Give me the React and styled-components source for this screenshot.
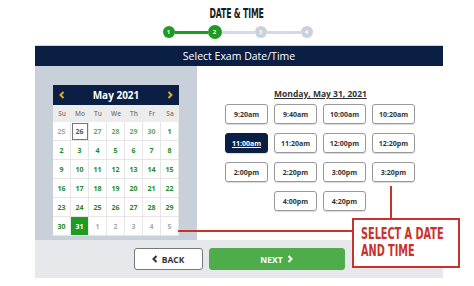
import React from "react";
import styled, { createGlobalStyle } from "styled-components";

const GlobalStyle = createGlobalStyle`
  html, body {
    margin: 0;
    padding: 0;
    background: #fff;
    font-family: "Open Sans", "Noto Sans", sans-serif;
  }
`;

const NAVY = "#0b1f45";
const GREEN = "#1f9a22";
const RED = "#c8322b";

const Page = styled.div`
  position: relative;
  width: 474px;
  height: 286px;
  overflow: hidden;
`;

const Title = styled.div`
  height: 20px;
  padding-top: 5px;
  display: flex;
  justify-content: center;
  & span {
    display: inline-block;
    font-family: "DejaVu Sans Condensed", "DejaVu Sans", sans-serif;
    font-weight: bold;
    font-size: 14px;
    line-height: 16px;
    color: #1c1c1c;
    letter-spacing: -0.3px;
    transform: scaleX(0.62);
  }
`;

const Stepper = styled.div`
  display: flex;
  align-items: center;
  justify-content: center;
  height: 14px;
  margin-left: 1px;
`;

const Dot = styled.div`
  width: ${p => (p.$active ? 14 : 12)}px;
  height: ${p => (p.$active ? 14 : 12)}px;
  border-radius: 50%;
  background: ${p => (p.$done ? GREEN : "#c9d1da")};
  color: #fff;
  font-size: 6px;
  font-weight: 700;
  display: flex;
  align-items: center;
  justify-content: center;
  flex-shrink: 0;
`;

const Line = styled.div`
  width: ${p => p.$w}px;
  height: 3px;
  background: ${p => (p.$done ? GREEN : "#d5dbe2")};
`;

const Card = styled.div`
  width: 408px;
  margin: 6px 0 0 35px;
`;

const Header = styled.div`
  height: 21px;
  background: ${NAVY};
  color: #fff;
  font-size: 10.5px;
  display: flex;
  align-items: center;
  justify-content: center;
  border-top: 1px solid #c9d6e6;
  box-sizing: border-box;
`;

const Body = styled.div`
  display: grid;
  grid-template-columns: 162px 1fr;
  height: 174px;
`;

const CalPanel = styled.div`
  background: #c8d1da;
  padding: 19px 0 0 18px;
`;

const Calendar = styled.div`
  width: 126px;
  background: #fff;
`;

const CalHead = styled.div`
  height: 20px;
  background: ${NAVY};
  color: #fff;
  display: flex;
  align-items: center;
  justify-content: space-between;
  padding: 0 6px;
  font-size: 10px;
  font-weight: 700;
`;

const Arrow = styled.span`
  color: #e2a72e;
  display: flex;
`;

const Grid = styled.div`
  display: grid;
  grid-template-columns: repeat(7, 18px);
`;

const DayName = styled.div`
  height: 17px;
  background: #ececec;
  color: #777;
  font-size: 6.5px;
  font-weight: 600;
  display: flex;
  align-items: center;
  justify-content: center;
`;

const Cell = styled.div`
  height: 19px;
  box-sizing: border-box;
  border-right: 1px solid #e6e6e6;
  border-bottom: 1px solid #e6e6e6;
  display: flex;
  align-items: center;
  justify-content: center;
  font-size: 7px;
  font-weight: 700;
  color: ${p => (p.$muted ? "#aaa" : p.$light ? "#5cae5c" : "#238a23")};
  background: ${p => (p.$selected ? GREEN : "#fff")};
  ${p => p.$selected && "color: #fff;"}
  ${p => p.$today && "outline: 1px solid #777; outline-offset: -2px; color: #555;"}
`;

const TimesPanel = styled.div`
  display: flex;
  flex-direction: column;
  align-items: center;
  padding-top: 22px;
`;

const DateLabel = styled.div`
  font-size: 8.5px;
  font-weight: 700;
  color: #333;
  text-decoration: underline;
  margin-bottom: 5px;
  margin-left: 1px;
`;

const Times = styled.div`
  display: grid;
  grid-template-columns: repeat(4, 43px);
  column-gap: 6px;
  row-gap: 9px;
`;

const Slot = styled.div`
  height: 20px;
  box-sizing: border-box;
  border: 1px solid #999;
  border-radius: 3px;
  box-shadow: 0 1px 1px rgba(0, 0, 0, 0.15);
  display: flex;
  align-items: center;
  justify-content: center;
  font-size: 7px;
  font-weight: 700;
  color: #333;
  grid-column: ${p => p.$col || "auto"};
  ${p =>
    p.$selected &&
    `background: ${NAVY}; color: #fff; border-color: ${NAVY}; text-decoration: underline;`}
`;

const Footer = styled.div`
  height: 38px;
  background: #e6e8eb;
  display: flex;
  align-items: center;
  justify-content: center;
  gap: 6px;
`;

const Button = styled.div`
  height: 22px;
  width: ${p => p.$w}px;
  box-sizing: border-box;
  border-radius: 3px;
  display: flex;
  align-items: center;
  justify-content: center;
  gap: 4px;
  font-size: 8.5px;
  font-weight: 700;
  color: ${p => (p.$primary ? "#fff" : "#333")};
  background: ${p => (p.$primary ? "#4eac4a" : "#fff")};
  border: 1px solid ${p => (p.$primary ? "#4eac4a" : "#777")};
`;

const Callout = styled.div`
  position: absolute;
  left: 352px;
  top: 218px;
  width: 108px;
  height: 50px;
  box-sizing: border-box;
  border: 2px solid ${RED};
  background: #fff;
  padding: 6px 0 0 7px;
  & span {
    display: block;
    white-space: nowrap;
    font-family: "DejaVu Sans Condensed", "DejaVu Sans", sans-serif;
    font-weight: bold;
    font-size: 15px;
    line-height: 17px;
    color: ${RED};
    transform: scaleX(0.72);
    transform-origin: left center;
  }
`;

const HLine = styled.div`
  position: absolute;
  left: 178px;
  top: 230px;
  width: 175px;
  height: 2px;
  background: ${RED};
`;

const VLine = styled.div`
  position: absolute;
  left: 390px;
  top: 186px;
  width: 2px;
  height: 33px;
  background: ${RED};
`;

const Chevron = ({ dir }) => (
  <svg width="6" height="8" viewBox="0 0 6 8">
    <path
      d={dir === "left" ? "M4.5 1 L1.5 4 L4.5 7" : "M1.5 1 L4.5 4 L1.5 7"}
      stroke="currentColor"
      strokeWidth="2"
      fill="none"
    />
  </svg>
);

const dayNames = ["Su", "Mo", "Tu", "We", "Th", "Fr", "Sa"];

const days = [
  { d: 25, muted: true },
  { d: 26, today: true },
  { d: 27, light: true },
  { d: 28, light: true },
  { d: 29, light: true },
  { d: 30, light: true },
  { d: 1 },
  ...Array.from({ length: 28 }, (_, i) => ({ d: i + 2 })),
  { d: 30 },
  { d: 31, selected: true },
  ...[1, 2, 3, 4, 5].map(d => ({ d, muted: true }))
];

const slots = [
  "9:20am", "9:40am", "10:00am", "10:20am",
  "11:00am", "11:20am", "12:00pm", "12:20pm",
  "2:00pm", "2:20pm", "3:00pm", "3:20pm"
];

export default function App() {
  return (
    <Page>
      <GlobalStyle />
      <Title>
        <span>DATE &amp; TIME</span>
      </Title>
      <Stepper>
        <Dot $done>1</Dot>
        <Line $done $w={33} />
        <Dot $done $active>2</Dot>
        <Line $w={33} />
        <Dot>3</Dot>
        <Line $w={34} />
        <Dot>4</Dot>
      </Stepper>
      <Card>
        <Header>Select Exam Date/Time</Header>
        <Body>
          <CalPanel>
            <Calendar>
              <CalHead>
                <Arrow>
                  <Chevron dir="left" />
                </Arrow>
                May 2021
                <Arrow>
                  <Chevron dir="right" />
                </Arrow>
              </CalHead>
              <Grid>
                {dayNames.map(n => (
                  <DayName key={n}>{n}</DayName>
                ))}
                {days.map((c, i) => (
                  <Cell
                    key={i}
                    $muted={c.muted}
                    $today={c.today}
                    $light={c.light}
                    $selected={c.selected}
                  >
                    {c.d}
                  </Cell>
                ))}
              </Grid>
            </Calendar>
          </CalPanel>
          <TimesPanel>
            <DateLabel>Monday, May 31, 2021</DateLabel>
            <Times>
              {slots.map(s => (
                <Slot key={s} $selected={s === "11:00am"}>
                  {s}
                </Slot>
              ))}
              <Slot $col={2}>4:00pm</Slot>
              <Slot $col={3}>4:20pm</Slot>
            </Times>
          </TimesPanel>
        </Body>
        <Footer>
          <Button $w={69}>
            <Chevron dir="left" />
            BACK
          </Button>
          <Button $primary $w={136}>
            NEXT
            <Chevron dir="right" />
          </Button>
        </Footer>
      </Card>
      <HLine />
      <VLine />
      <Callout>
        <span>SELECT A DATE</span>
        <span>AND TIME</span>
      </Callout>
    </Page>
  );
}
